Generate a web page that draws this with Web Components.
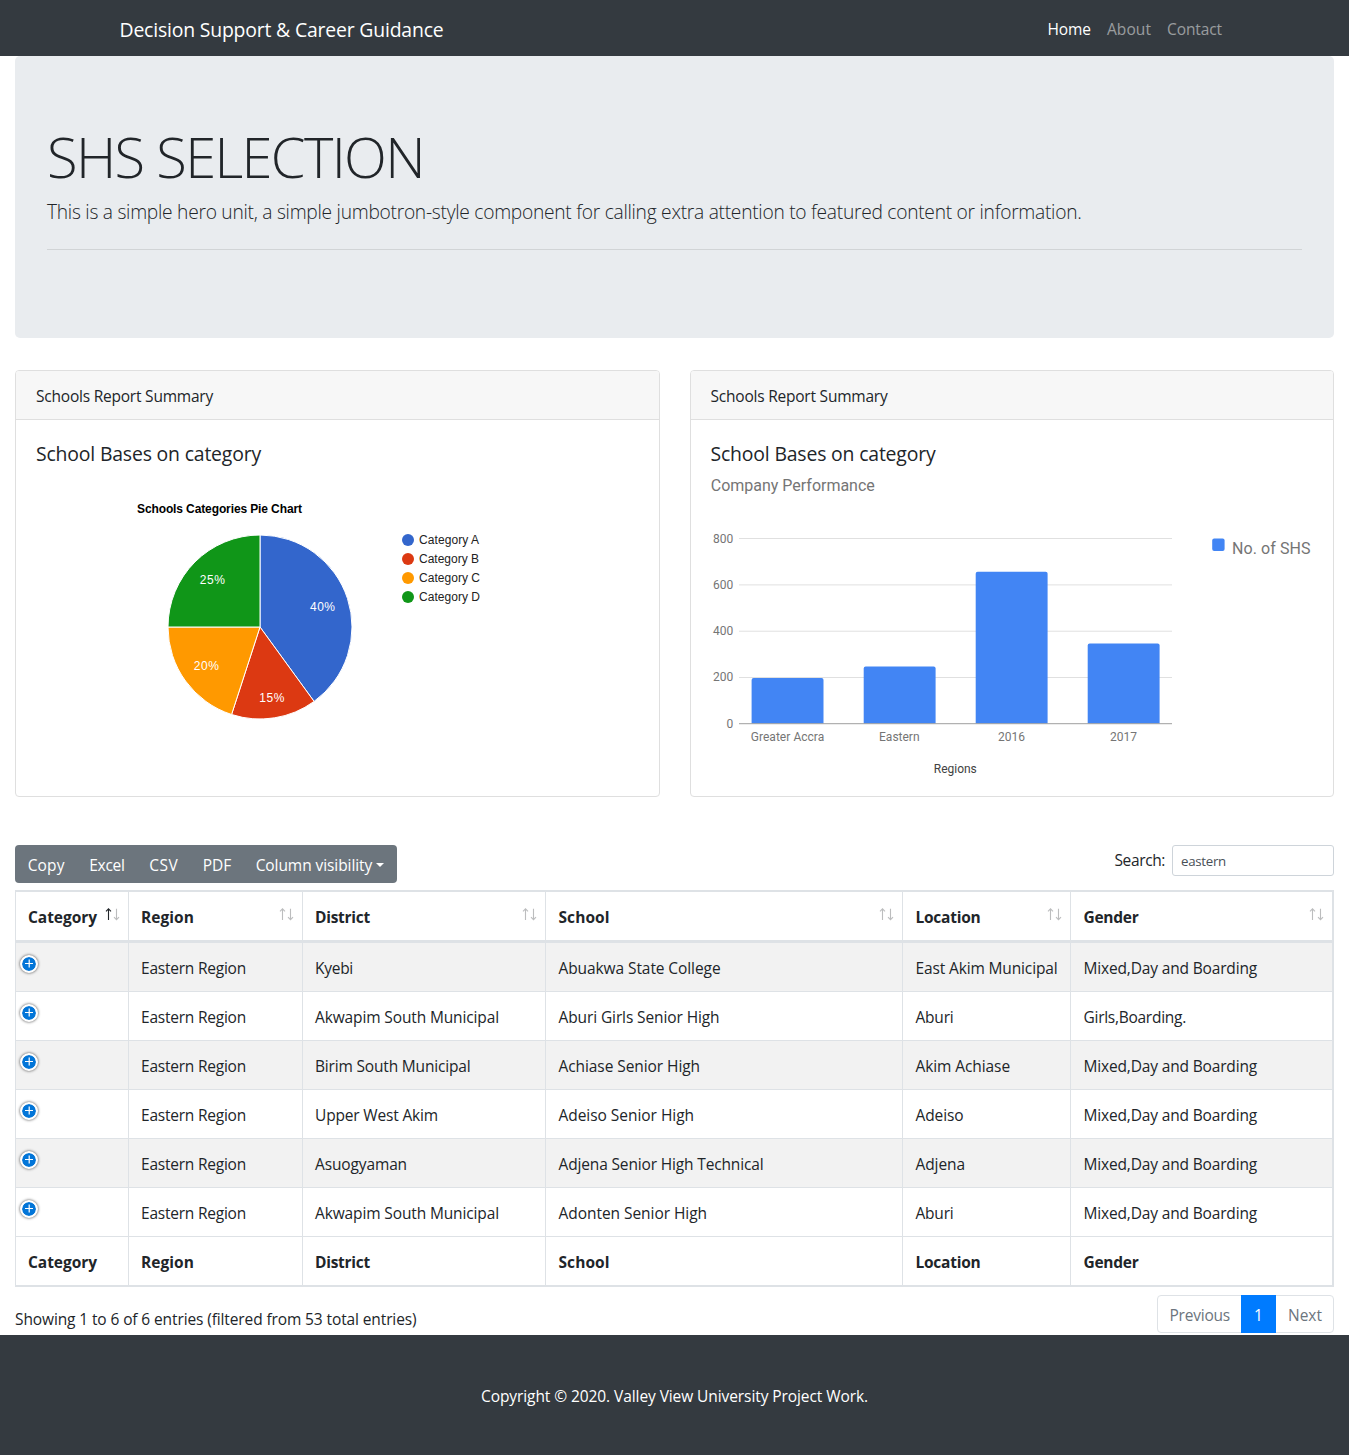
<!DOCTYPE html>
<html lang="en">
<head>
<meta charset="utf-8">
<title>Decision Support &amp; Career Guidance</title>
<style>
html,body{margin:0;padding:0;background:#fff}
body{font-family:"Open Sans","Noto Sans",sans-serif;font-size:15.5px;line-height:24px;color:#212529}
</style>
</head>
<body>
<dss-page></dss-page>
<script>
const define = (name, html, setup) => {
  const tpl = document.createElement('template');
  tpl.innerHTML = html;
  customElements.define(name, class extends HTMLElement {
    connectedCallback() {
      if (this.shadowRoot) return;
      const root = this.attachShadow({mode: 'open'});
      root.append(tpl.content.cloneNode(true));
      if (setup) setup(this, root);
    }
  });
};

/* One line of text tracked to the width in its "w" attribute. */
define('fit-text', `<style>:host{display:inline-block;white-space:pre}</style><slot></slot>`, host => {
  const w = parseFloat(host.getAttribute('w'));
  if (!w) return;
  const natural = host.getBoundingClientRect().width;
  host.style.letterSpacing = ((w - natural) / host.textContent.length).toFixed(4) + 'px';
});

define('nav-bar', `<style>
:host{display:flex;box-sizing:border-box;height:56px;background:#343a40;padding:2px 127px 0 119.5px;justify-content:space-between;align-items:center;color:#fff}
.brand{font-size:19.4px;line-height:30px;padding-top:2px}
nav{display:flex;gap:16px}
.off{color:rgba(255,255,255,.5)}
</style>
<fit-text class="brand" w="324">Decision Support &amp; Career Guidance</fit-text>
<nav><fit-text w="43.5">Home</fit-text><fit-text class="off" w="44">About</fit-text><fit-text class="off" w="55">Contact</fit-text></nav>`);

define('hero-unit', `<style>
:host{display:block;box-sizing:border-box;height:282px;margin:0 15px;padding:64px 32px;background:#e9ecef;border-radius:5px}
h1{margin:0 0 8px;font-size:56px;line-height:67px;font-weight:300;padding-top:3px;height:66px}
p{margin:0;font-size:19.2px;line-height:30px;font-weight:300}
hr{margin:22px 0 0;border:0;border-top:1px solid rgba(0,0,0,.1)}
</style>
<h1><fit-text w="377">SHS SELECTION</fit-text></h1>
<p><fit-text w="1034.5">This is a simple hero unit, a simple jumbotron-style component for calling extra attention to featured content or information.</fit-text></p>
<hr>`);

define('report-card', `<style>
:host{display:flex;flex-direction:column;flex:1;box-sizing:border-box;height:427px;border:1px solid #dfdfdf;border-radius:4px;background:#fff;overflow:hidden}
header{box-sizing:border-box;height:49px;padding:13px 20px 0;background:#f7f7f7;border-bottom:1px solid #dfdfdf}
section{padding:22px 20px 0}
h5{margin:0 0 10px;font-size:19.4px;line-height:24px;font-weight:400}
</style>
<header><fit-text w="177">Schools Report Summary</fit-text></header>
<section><h5><fit-text w="225">School Bases on category</fit-text></h5><slot></slot></section>`);

define('pie-chart', `<style>
:host{display:block}svg{display:block}
text{font-family:"Liberation Sans",Arial,sans-serif;font-size:12px;fill:#222}
.pct{fill:#fff;text-anchor:middle}
path{stroke:#fff;stroke-width:1}
</style>
<svg width="602" height="300" viewBox="36 476 602 300">
<text x="137" y="513" style="font-weight:700;fill:#000" textLength="165">Schools Categories Pie Chart</text>
<path fill="#3366cc" d="M260 627V535A92 92 0 0 1 314.08 701.43Z"/>
<path fill="#dc3912" d="M260 627L314.08 701.43A92 92 0 0 1 231.57 714.5Z"/>
<path fill="#ff9900" d="M260 627L231.57 714.5A92 92 0 0 1 168 627Z"/>
<path fill="#109618" d="M260 627H168A92 92 0 0 1 260 535Z"/>
<text class="pct" x="322.5" y="611" textLength="25">40%</text>
<text class="pct" x="271.8" y="702" textLength="25">15%</text>
<text class="pct" x="206.3" y="670" textLength="25">20%</text>
<text class="pct" x="212.3" y="584" textLength="25">25%</text>
<circle cx="408" cy="540" r="6" fill="#3366cc"/><text x="419" y="544" textLength="60">Category A</text>
<circle cx="408" cy="559" r="6" fill="#dc3912"/><text x="419" y="563" textLength="60">Category B</text>
<circle cx="408" cy="578" r="6" fill="#ff9900"/><text x="419" y="582" textLength="61">Category C</text>
<circle cx="408" cy="597" r="6" fill="#109618"/><text x="419" y="601" textLength="61">Category D</text>
</svg>`);

define('bar-chart', `<style>
:host{display:block}svg{display:block}
text{font-family:Roboto,sans-serif;font-size:12px;fill:#757575}
.big{font-size:16px}.y{text-anchor:end}.x{text-anchor:middle}
</style>
<svg width="602" height="300" viewBox="711 476 602 300">
<text class="big" x="710.8" y="491" textLength="164">Company Performance</text>
<g fill="#e0e0e0"><rect x="739" y="538" width="433" height="1"/><rect x="739" y="584.4" width="433" height="1"/><rect x="739" y="630.7" width="433" height="1"/><rect x="739" y="677" width="433" height="1"/></g>
<g fill="#4285f4">
<path d="M751.6 723.5V680a2 2 0 0 1 2-2H821.5a2 2 0 0 1 2 2V723.5Z"/>
<path d="M863.7 723.5V668.6a2 2 0 0 1 2-2H933.6a2 2 0 0 1 2 2V723.5Z"/>
<path d="M975.7 723.5V573.7a2 2 0 0 1 2-2H1045.6a2 2 0 0 1 2 2V723.5Z"/>
<path d="M1087.7 723.5V645.4a2 2 0 0 1 2-2H1157.6a2 2 0 0 1 2 2V723.5Z"/>
<rect x="1212.2" y="538.6" width="12.4" height="12.4" rx="2"/></g>
<rect x="739" y="723.2" width="433" height="1" fill="#9e9e9e"/>
<text class="y" x="733.3" y="543">800</text><text class="y" x="733.3" y="589">600</text><text class="y" x="733.3" y="635">400</text><text class="y" x="733.3" y="681">200</text><text class="y" x="733.3" y="728">0</text>
<text class="x" x="787.5" y="741" textLength="73.5">Greater Accra</text><text class="x" x="899.3" y="741" textLength="40.5">Eastern</text><text class="x" x="1011.5" y="741">2016</text><text class="x" x="1123.5" y="741">2017</text>
<text class="x" x="955.3" y="773" style="fill:#424242" textLength="43">Regions</text>
<text class="big" x="1232" y="554" textLength="78.5">No. of SHS</text>
</svg>`);

define('button-group', `<style>
:host{display:flex;box-sizing:border-box;width:382px;height:38px;padding:8px 0 0 12.7px;gap:24.5px;background:#6c757d;border-radius:4px;color:#fff}
.menu{display:flex;gap:4px}
i{margin-top:10px;width:0;height:0;border:4.8px solid transparent;border-top-color:#fff;border-bottom:0;border-left-width:4.4px;border-right-width:4.4px}
</style>
<fit-text w="37">Copy</fit-text><fit-text w="35.5">Excel</fit-text><fit-text w="29">CSV</fit-text><fit-text w="28.5">PDF</fit-text><span class="menu"><fit-text w="116.5">Column visibility</fit-text><i></i></span>`);

define('search-box', `<style>
:host{display:flex;gap:7px}
label{padding-top:3px}
.field{box-sizing:border-box;width:162px;height:31px;border:1px solid #ced4da;border-radius:3px;padding:4px 8px;font-size:13.3px;line-height:22px;color:#495057}
</style>
<label><fit-text w="50.5">Search:</fit-text></label><div class="field" role="textbox"><fit-text w="45">eastern</fit-text></div>`);

define('sort-arrows', `<style>
:host{display:block;color:#212529;margin:2px 7px 0 0}svg{display:block}
path{fill:none;stroke:currentColor;stroke-width:1.1;opacity:.3}
:host([asc]) .up{opacity:1}
</style>
<svg width="17" height="14" viewBox="0 0 17 14"><path class="up" d="M4.5 13V2.2M2 4.4L4.5 1.9L7 4.4"/><path d="M12.5 1.8V12.4M10 10.1L12.5 12.6L15 10.1"/></svg>`);

define('expand-icon', `<style>
:host{display:block;box-sizing:border-box;width:18px;height:18px;border:2px solid #fff;border-radius:50%;background:#0275d8;background-clip:padding-box;box-shadow:0 0 3px #444;margin-left:-8px}
svg{display:block}
</style><svg width="14" height="14" viewBox="0 0 14 14"><path d="M3 6.5H11M7.2 2.5V10.5" stroke="#fff" stroke-width="1.2" fill="none"/></svg>`);

const COLS = [['Category',69],['Region',53],['District',55],['School',51],['Location',65],['Gender',55]];
const REG = ['Eastern Region',105], MIX = ['Mixed,Day and Boarding',173.5];
const ROWS = [
  [REG,['Kyebi',38],['Abuakwa State College',162],['East Akim Municipal',142],MIX],
  [REG,['Akwapim South Municipal',184],['Aburi Girls Senior High',161],['Aburi',38],['Girls,Boarding.',102.5]],
  [REG,['Birim South Municipal',155.5],['Achiase Senior High',141.5],['Akim Achiase',94.5],MIX],
  [REG,['Upper West Akim',123],['Adeiso Senior High',135.5],['Adeiso',48],MIX],
  [REG,['Asuogyaman',92],['Adjena Senior High Technical',205],['Adjena',49.5],MIX],
  [REG,['Akwapim South Municipal',184],['Adonten Senior High',148.5],['Aburi',38],MIX]
];
define('school-table', `<style>
:host{display:block;box-sizing:border-box;border:1px solid #dee2e6;height:397px}
.row{display:grid;grid-template-columns:113px 174px 243px 357px 168px 262px;height:49px}
.row>div{box-sizing:border-box;display:flex;justify-content:space-between;align-items:flex-start;border:0 solid #dee2e6;border-width:1px 1px 0 0;padding:13px 0 0 12px}
.row>div:nth-child(n+4){padding-left:12.5px}
.head,.foot{font-weight:700}
.head{height:51px}.head>div{border-bottom-width:2px}
.foot{height:50px}.foot>div{border-bottom-width:1px}
.odd{background:#f2f2f2}
expand-icon{margin-top:-1px}
</style>`, (host, root) => {
  const cell = ([t, w]) => `<fit-text w="${w}">${t}</fit-text>`;
  const row = (cls, cells) => `<div class="row ${cls}">${cells.map(c => `<div>${c}</div>`).join('')}</div>`;
  const box = document.createElement('div');
  box.innerHTML = row('head', COLS.map((c, i) => cell(c) + `<sort-arrows${i ? '' : ' asc'}></sort-arrows>`))
    + ROWS.map((r, i) => row(i % 2 ? '' : 'odd', ['<expand-icon></expand-icon>', ...r.map(cell)])).join('')
    + row('foot', COLS.map(cell));
  root.append(box);
});

define('page-links', `<style>
:host{display:flex;box-sizing:border-box;width:177px;height:38px;border:1px solid #dee2e6;border-radius:4px;color:#6c757d}
span{padding-top:7px;box-sizing:border-box}
.prev{padding-left:11.5px;width:83px}
.on{background:#007bff;color:#fff;width:35px;height:38px;margin:-1px 0;padding-top:8px;text-align:center}
.next{padding-left:12px}
</style>
<span class="prev"><fit-text w="60.5">Previous</fit-text></span><span class="on">1</span><span class="next"><fit-text w="34">Next</fit-text></span>`);

define('site-footer', `<style>
:host{display:flex;height:120px;background:#343a40;color:#fff;justify-content:center;align-items:center;padding-top:2px;box-sizing:border-box}
</style><fit-text w="387">Copyright © 2020. Valley View University Project Work.</fit-text>`);

define('dss-page', `<style>
:host{display:block;width:1349px}
.cards{display:flex;gap:30px;margin:32px 15px 48px}
.tools{display:flex;justify-content:space-between;margin:0 15px 7px;height:38px}
school-table{margin:0 15px}
.bottom{display:flex;justify-content:space-between;margin:8px 15px 0;height:40px}
.info{padding-top:12px}
</style>
<nav-bar></nav-bar>
<hero-unit></hero-unit>
<div class="cards"><report-card><pie-chart></pie-chart></report-card><report-card><bar-chart></bar-chart></report-card></div>
<div class="tools"><button-group></button-group><search-box></search-box></div>
<school-table></school-table>
<div class="bottom"><div class="info"><fit-text w="401.5">Showing 1 to 6 of 6 entries (filtered from 53 total entries)</fit-text></div><page-links></page-links></div>
<site-footer></site-footer>`);
</script>
</body>
</html>
